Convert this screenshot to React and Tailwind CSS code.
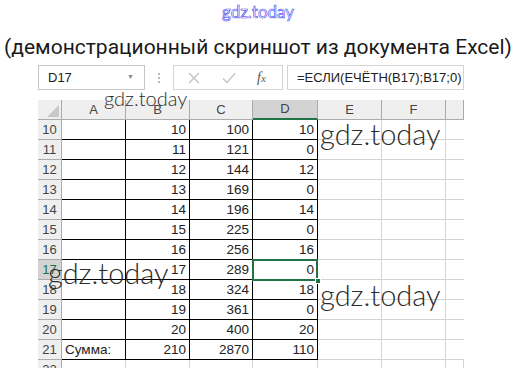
import React from "react";

const rows = [
  [10, "", "10", "100", "10"],
  [11, "", "11", "121", "0"],
  [12, "", "12", "144", "12"],
  [13, "", "13", "169", "0"],
  [14, "", "14", "196", "14"],
  [15, "", "15", "225", "0"],
  [16, "", "16", "256", "16"],
  [17, "", "17", "289", "0"],
  [18, "", "18", "324", "18"],
  [19, "", "19", "361", "0"],
  [20, "", "20", "400", "20"],
  [21, "Сумма:", "210", "2870", "110"],
];

const letters = ["A", "B", "C", "D", "E", "F", ""];

function Watermark({ className }) {
  return (
    <div
      className={
        "absolute font-['Lato','DejaVu_Sans',sans-serif] font-light text-[#2b2b2b] leading-none pointer-events-none " +
        className
      }
    >
      gdz.today
    </div>
  );
}

function FormulaBar() {
  return (
    <div className="flex items-stretch h-[25px] w-[426px] font-['Liberation_Sans',sans-serif] text-[13px] text-[#222]">
      <div className="w-[107px] border border-[#c6c6c6] flex items-center justify-between pl-[9px] pr-[10px]">
        <span>D17</span>
        <span className="text-[7px] text-[#888]">▼</span>
      </div>
      <div className="w-[28px] flex flex-col items-center justify-center gap-[2px]">
        <span className="w-[2px] h-[2px] bg-[#bbb]" />
        <span className="w-[2px] h-[2px] bg-[#bbb]" />
        <span className="w-[2px] h-[2px] bg-[#bbb]" />
      </div>
      <div className="w-[110px] border border-[#d4d4d4] flex items-center text-[#b5b5b5]">
        <svg width="12" height="12" viewBox="0 0 12 12" className="ml-[14px]">
          <path d="M1 1L11 11M11 1L1 11" stroke="#c0c0c0" strokeWidth="1.3" fill="none" />
        </svg>
        <svg width="14" height="12" viewBox="0 0 14 12" className="ml-[22px]">
          <path d="M1 6.5L5 10.5L13 1.5" stroke="#c4c4c4" strokeWidth="1.3" fill="none" />
        </svg>
        <span className="ml-[21px] font-['Liberation_Serif',serif] italic text-[14px] text-[#555]">
          f<span className="text-[11px]">x</span>
        </span>
      </div>
      <div className="ml-[4px] flex-1 border border-[#d4d4d4] flex items-center pl-[9px]">
        =ЕСЛИ(ЕЧЁТН(B17);B17;0)
      </div>
    </div>
  );
}

function Sheet() {
  return (
    <div className="relative mt-[10px] grid grid-cols-[24px_64px_64px_63px_65px_64px_64px_18px] font-['Liberation_Sans',sans-serif] text-[13.5px] text-[#222]">
      <div className="h-5 bg-[#efefef] border-r border-b border-[#ababab] relative overflow-hidden">
        <div className="absolute right-[2px] bottom-[2px] w-0 h-0 border-l-[12px] border-l-transparent border-b-[12px] border-b-[#c8c8c8]" />
      </div>
      {letters.map((l, i) => (
        <div
          key={i}
          className={
            "h-5 flex items-center justify-center text-[13px] text-[#444] border-r border-[#ababab] " +
            (l === "D"
              ? "bg-[#d3d3d3] border-b-2 border-b-[#217346]"
              : "bg-[#efefef] border-b border-b-[#ababab]")
          }
        >
          {l}
        </div>
      ))}
      {rows.map((r) => (
        <React.Fragment key={r[0]}>
          <div
            className={
              "h-5 flex items-center justify-center text-[13px] border-r border-b border-[#ababab] " +
              (r[0] === 17 ? "bg-[#d3d3d3] text-[#217346]" : "bg-[#efefef] text-[#444]")
            }
          >
            {r[0]}
          </div>
          {r.slice(1).map((v, i) => (
            <div
              key={i}
              className={
                "h-5 leading-5 border-r border-b border-black whitespace-nowrap " +
                (i === 0 ? "text-left pl-[3px]" : "text-right pr-[3px]")
              }
            >
              {v}
            </div>
          ))}
          <div className="h-5 border-r border-b border-[#d4d4d4]" />
          <div className="h-5 border-r border-b border-[#d4d4d4]" />
          <div className="h-5 border-b border-[#d4d4d4]" />
        </React.Fragment>
      ))}
      <div className="h-5 flex items-center justify-center text-[13px] text-[#444] bg-[#efefef] border-r border-[#ababab]">
        22
      </div>
      {[0, 1, 2, 3, 4, 5, 6].map((i) => (
        <div key={i} className="h-5 border-r border-[#d4d4d4]" />
      ))}
      <div className="absolute left-[214px] top-[159px] w-[66px] h-[22px] border-2 border-[#217346]" />
      <div className="absolute left-[277px] top-[178px] w-[6px] h-[6px] bg-[#217346] border border-white" />
    </div>
  );
}

export default function App() {
  return (
    <div className="relative w-[516px] h-[368px] overflow-hidden bg-white">
      <div className="h-[24px] flex items-center justify-center font-['Lato','DejaVu_Sans',sans-serif] text-[17px] text-transparent [-webkit-text-stroke:0.6px_#3c3cf0]">
        gdz.today
      </div>
      <div className="mt-[11px] h-[24px] text-center font-['Roboto',sans-serif] text-[21px] leading-[24px] text-[#1a1a1a] whitespace-nowrap">
        (демонстрационный скриншот из документа Excel)
      </div>
      <div className="ml-[38px] mt-[6px]">
        <FormulaBar />
        <Sheet />
      </div>
      <Watermark className="left-[104px] top-[88px] text-[20px]" />
      <Watermark className="left-[320px] top-[119px] text-[29px]" />
      <Watermark className="left-[48px] top-[258px] text-[29px]" />
      <Watermark className="left-[320px] top-[280px] text-[29px]" />
    </div>
  );
}
